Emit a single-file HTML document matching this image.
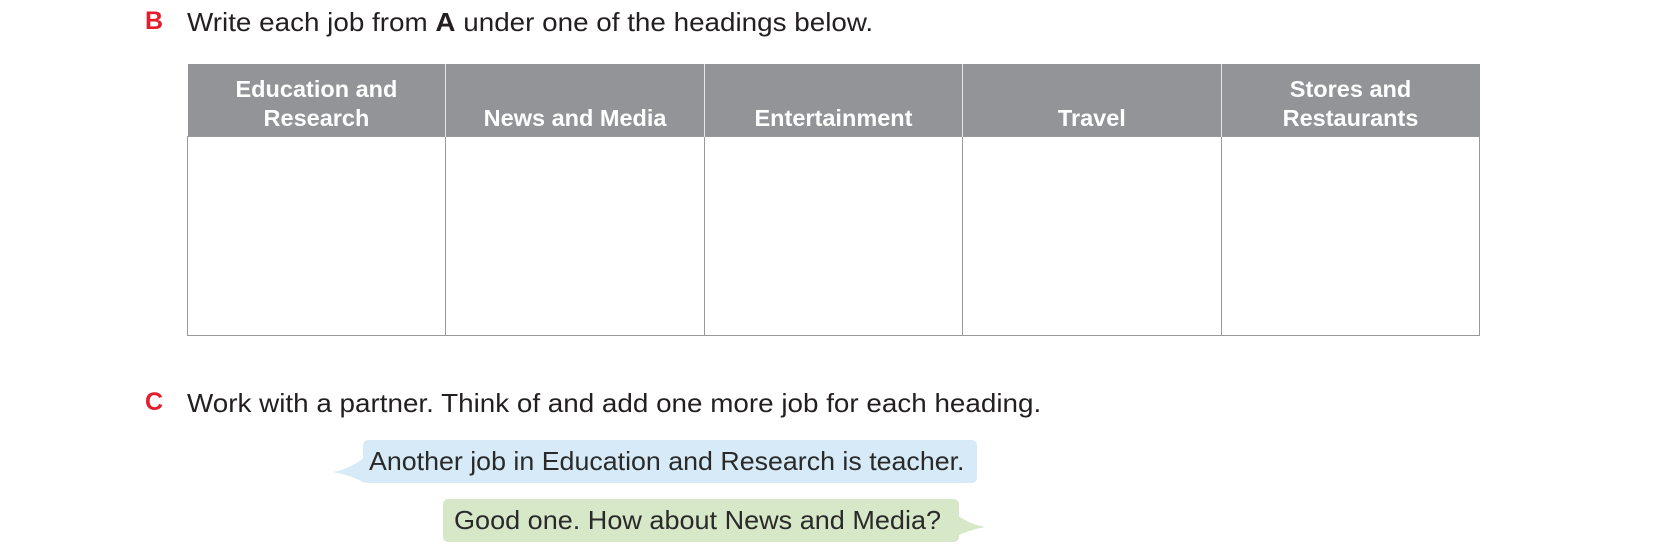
<!DOCTYPE html>
<html><head><meta charset="utf-8"><style>
body{margin:0;width:1674px;height:552px;background:#fff;font-family:"Liberation Sans",Arial,sans-serif;position:relative;overflow:hidden}
.ln{position:absolute;font-size:26px;color:#231f20;white-space:nowrap;transform-origin:left center}
.lt{position:absolute;font-weight:bold;color:#e31d2b;font-size:25px}
table{position:absolute;left:187px;top:64px;border-collapse:collapse;width:1293px}
th{background:#929497;color:#fff;font-size:23.5px;font-weight:bold;height:69px;vertical-align:bottom;padding:0 0 3px;line-height:29px;border-left:1px solid #e6e6e6;width:20%}
th:first-child{border-left:none}
td{height:196px;border:1px solid #9a9a9a}
.b{position:absolute;font-size:26px;color:#2a2a2a;height:43px;line-height:43px;border-radius:5px;white-space:nowrap}
</style></head><body>
<div class="lt" style="left:145px;top:7px">B</div>
<div class="ln" style="left:187px;top:7px;transform:scaleX(1.07)">Write each job from <b>A</b> under one of the headings below.</div>
<table><tr><th>Education and<br>Research</th><th>News and Media</th><th>Entertainment</th><th>Travel</th><th>Stores and<br>Restaurants</th></tr>
<tr><td></td><td></td><td></td><td></td><td></td></tr></table>
<div class="lt" style="left:145px;top:388px">C</div>
<div class="ln" style="left:187px;top:388px;transform:scaleX(1.07)">Work with a partner. Think of and add one more job for each heading.</div>
<svg style="position:absolute;left:330px;top:455px" width="40" height="30"><path d="M3 17 Q20 14 35 2 L35 28 Q20 20 3 17Z" fill="#d6ebf7"/></svg>
<div class="b" style="left:363px;top:440px;width:614px;background:#d6ebf7"><span style="display:inline-block;margin-left:6px;transform:scaleX(1.03);transform-origin:left">Another job in Education and Research is teacher.</span></div>
<svg style="position:absolute;left:950px;top:510px" width="40" height="30"><path d="M35 17 Q18 14 3 2 L3 28 Q18 20 35 17Z" fill="#d6e8c8"/></svg>
<div class="b" style="left:443px;top:499px;width:516px;background:#d6e8c8"><span style="display:inline-block;margin-left:11px;transform:scaleX(1.04);transform-origin:left">Good one. How about News and Media?</span></div>
</body></html>
